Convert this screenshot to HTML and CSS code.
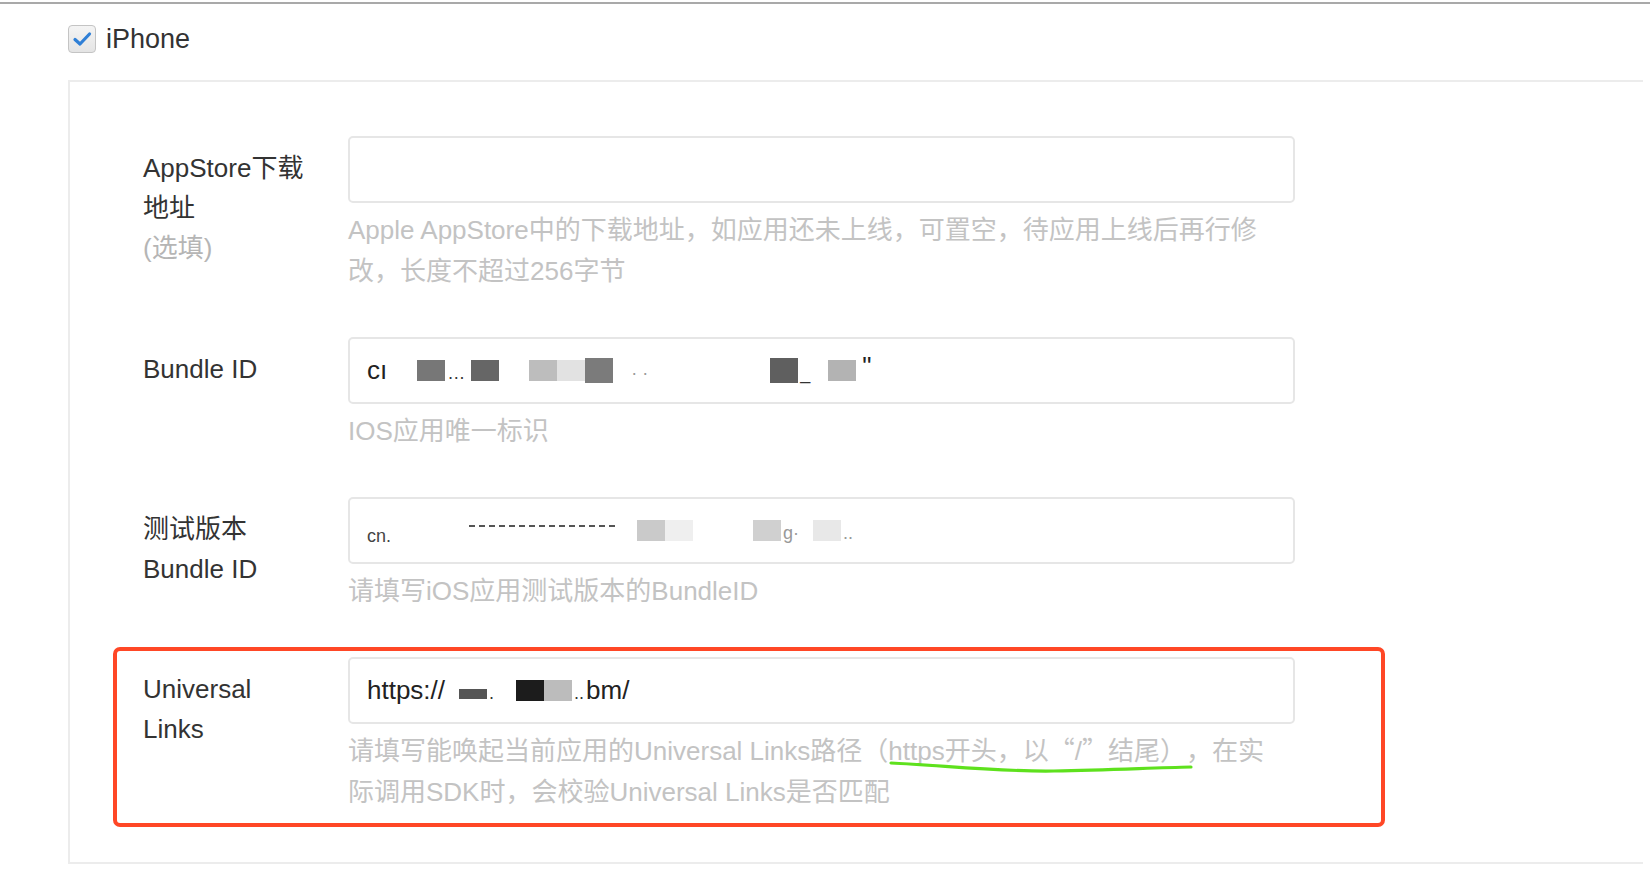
FILE: index.html
```html
<!DOCTYPE html>
<html lang="zh-CN">

<head>
  <meta charset="UTF-8">
  <meta name="viewport" content="width=device-width, initial-scale=1.0">
  <title>iPhone 平台信息</title>
  <link rel="stylesheet" href="styles.css">
</head>

<body>
  <div class="topline"></div>
  <label class="platform">
    <span class="checkbox">
      <svg viewBox="0 0 28 28" width="28" height="28">
        <path d="M7 14.5 L12 19 L21.5 9" fill="none" stroke="#2f7fd6" stroke-width="3.2" stroke-linecap="round" stroke-linejoin="round"/>
      </svg>
    </span>
    <span class="platform-name">iPhone</span>
  </label>

  <div class="panel">
    <div class="row">
      <div class="label">AppStore下载地址<span class="optional">(选填)</span></div>
      <div class="field">
        <div class="input"></div>
        <p class="hint">Apple AppStore中的下载地址，如应用还未上线，可置空，待应用上线后再行修改，长度不超过256字节</p>
      </div>
    </div>

    <div class="row">
      <div class="label">Bundle ID</div>
      <div class="field">
        <div class="input">
          <span class="val">cı</span>
          <i class="mask" style="margin-left: 30px; background: #777;"></i>
          <span class="dots">…</span>
          <i class="mask" style="margin-left: 4px; background: #666;"></i>
          <i class="mask" style="margin-left: 30px; background: #bdbdbd;"></i>
          <i class="mask" style="background: #e2e2e2;"></i>
          <i class="mask tall" style="background: #7b7b7b;"></i>
          <span class="dots light" style="margin-left: 18px;">· ·</span>
          <i class="mask tall" style="margin-left: 120px; background: #5f5f5f;"></i>
          <span class="dots">_</span>
          <i class="mask" style="margin-left: 16px; background: #b3b3b3;"></i>
          <span class="val small">"</span>
        </div>
        <p class="hint">IOS应用唯一标识</p>
      </div>
    </div>

    <div class="row">
      <div class="label">测试版本 Bundle ID</div>
      <div class="field">
        <div class="input">
          <span class="val low">cn.</span>
          <span class="dash" style="margin-left: 78px;"></span>
          <i class="mask" style="margin-left: 22px; background: #cacaca;"></i>
          <i class="mask" style="background: #efefef;"></i>
          <i class="mask" style="margin-left: 60px; background: #d0d0d0;"></i>
          <span class="dots light">g·</span>
          <i class="mask" style="margin-left: 12px; background: #e8e8e8;"></i>
          <span class="dots light">..</span>
        </div>
        <p class="hint">请填写iOS应用测试版本的BundleID</p>
      </div>
    </div>

    <div class="row marked">
      <div class="label">Universal Links</div>
      <div class="field">
        <div class="input">
          <span class="val">https://</span>
          <i class="mask flat" style="margin-left: 14px; background: #555;"></i>
          <span class="dots">.</span>
          <i class="mask" style="margin-left: 20px; background: #1c1c1c;"></i>
          <i class="mask" style="background: #bcbcbc;"></i>
          <span class="dots">..</span>
          <span class="val">bm/</span>
        </div>
        <p class="hint">请填写能唤起当前应用的Universal Links路径（https开头，以<span class="cjk">“</span>/<span class="cjk">”</span>结尾），在实际调用SDK时，会校验Universal Links是否匹配</p>
      </div>
      <div class="redbox"></div>
      <svg class="scribble" width="306" height="16" viewBox="0 0 306 16">
        <path d="M2 3 C 50 5, 110 12, 165 11 S 260 8, 302 7" fill="none" stroke="#5ee11d" stroke-width="3.2" stroke-linecap="round"/>
      </svg>
    </div>
  </div>
</body>

</html>
```

FILE: styles.css
```css
body {
  margin: 0;
  background: #fff;
  font-family: "Liberation Sans", "Noto Sans CJK SC", sans-serif;
  color: #333;
  text-spacing-trim: space-all;
}

.topline {
  height: 2px;
  margin-top: 2px;
  background: #a9a9a9;
}

.platform {
  display: flex;
  align-items: center;
  gap: 10px;
  margin: 21px 0 0 68px;
  height: 28px;
}

.checkbox {
  width: 28px;
  height: 28px;
  box-sizing: border-box;
  border: 1px solid #c4c4c4;
  border-radius: 4px;
  background: linear-gradient(#f4f4f4, #e4e4e4);
  display: flex;
}

.checkbox svg {
  margin: -1px;
}

.platform-name {
  font-size: 27px;
  color: #333;
}

.panel {
  margin: 27px 0 0 68px;
  width: 1575px;
  border: 2px solid #ececec;
  border-right: none;
  padding: 54px 0 49px 73px;
  box-sizing: border-box;
  display: flex;
  flex-direction: column;
  gap: 45px;
}

.row {
  display: grid;
  grid-template-columns: 205px 947px;
  position: relative;
}

.label {
  padding-top: 12px;
  width: 170px;
  font-size: 26px;
  line-height: 40px;
  color: #333;
}

.optional {
  display: block;
  color: #b5b5b5;
}

.input {
  height: 67px;
  box-sizing: border-box;
  border: 2px solid #e6e6e6;
  border-radius: 5px;
  padding-left: 17px;
  display: flex;
  align-items: center;
  overflow: hidden;
}

.val {
  font-size: 26px;
  color: #222;
}

.val.small {
  margin-left: 6px;
  margin-top: -8px;
}

.val.low {
  font-size: 18px;
  color: #444;
  margin-top: 12px;
}

.mask {
  display: inline-block;
  width: 28px;
  height: 21px;
}

.mask.tall {
  height: 25px;
}

.mask.flat {
  height: 10px;
  margin-top: 6px;
}

.dots {
  font-size: 18px;
  color: #333;
  margin: 6px 2px 0;
}

.dots.light {
  color: #999;
}

.dash {
  display: inline-block;
  width: 146px;
  height: 0;
  border-top: 2px dashed #555;
  margin-top: -10px;
}

.hint {
  margin: 7px 0 0;
  max-width: 932px;
  font-size: 26px;
  line-height: 41px;
  color: #c3c3c3;
}

.cjk {
  font-family: "Noto Sans CJK SC", sans-serif;
  line-height: 1;
}

.redbox {
  position: absolute;
  left: -30px;
  top: -10px;
  width: 1272px;
  height: 180px;
  box-sizing: border-box;
  border: 4px solid #ff4726;
  border-radius: 7px;
}

.scribble {
  position: absolute;
  left: 746px;
  top: 103px;
}
```
